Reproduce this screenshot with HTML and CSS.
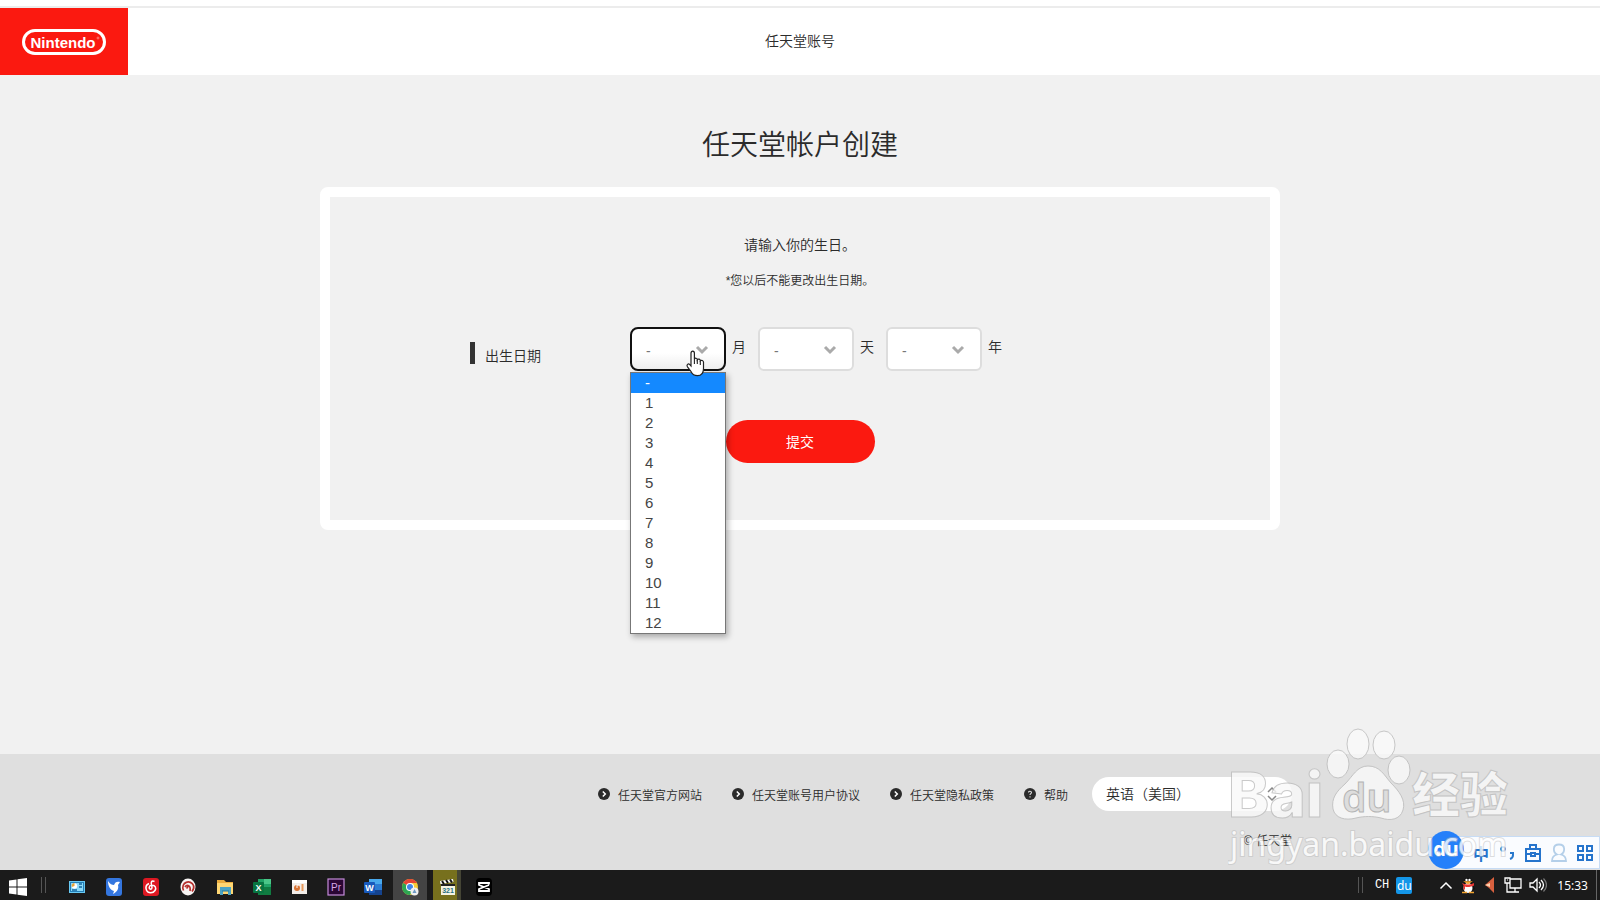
FILE: index.html
```
<!DOCTYPE html>
<html lang="zh-CN">
<head>
    <meta charset="UTF-8">
    <meta name="viewport" content="width=device-width, initial-scale=1.0">
    <title>任天堂帐户创建</title>
    <link rel="stylesheet" href="styles.css">
</head>
<body>
    <header class="header">
        <a href="/" class="logo" aria-label="Nintendo">
            <svg width="84" height="26" viewBox="0 0 84 26">
                <rect x="1.5" y="1.5" width="81" height="23" rx="11.5" fill="none" stroke="#fff" stroke-width="3"/>
                <text x="41" y="19" class="logo-text" text-anchor="middle">Nintendo</text>
                <circle cx="76" cy="9" r="1" fill="none" stroke="#ffb0aa" stroke-width=".6"/>
            </svg>
        </a>
        <p class="header-title">任天堂账号</p>
    </header>

    <main class="main">
        <h1>任天堂帐户创建</h1>
        <form class="card">
            <p class="lead">请输入你的生日。</p>
            <p class="note">*您以后不能更改出生日期。</p>
            <div class="birthday">
                <span class="birthday-label">出生日期</span>
                <div class="field open">
                    <select id="month"><option>-</option></select>
                    <svg class="chevron" width="14" height="10" viewBox="0 0 14 10"><path d="M2 2l5 5 5-5"/></svg>
                    <ul class="options">
                        <li class="selected">-</li>
                        <li>1</li>
                        <li>2</li>
                        <li>3</li>
                        <li>4</li>
                        <li>5</li>
                        <li>6</li>
                        <li>7</li>
                        <li>8</li>
                        <li>9</li>
                        <li>10</li>
                        <li>11</li>
                        <li>12</li>
                    </ul>
                    <svg class="pointer" width="19" height="27" viewBox="0 0 19 27">
                        <path d="M5 3.2C5 .4 8.400 .4 8.400 3.200V9C9 7.700 11.300 8 11.300 9.700C12.200 8.500 14.300 9 14.300 10.700C15.500 9.800 17.500 10.500 17.500 12.300V18.500C17.500 22.500 15.500 25.700 11.500 25.700C8 25.700 6.300 24.300 5 21.500L1.500 16.800C.2 14.600 2.300 13.200 3.800 14.600L5 16Z" fill="#fff" stroke="#222" stroke-width="1.2"/>
                        <path d="M8.400 9v5M11.300 10v4M14.300 11v4" stroke="#222" stroke-width="1.100"/>
                    </svg>
                </div>
                <label for="month">月</label>
                <div class="field">
                    <select id="day"><option>-</option></select>
                    <svg class="chevron" width="14" height="10" viewBox="0 0 14 10"><path d="M2 2l5 5 5-5"/></svg>
                </div>
                <label for="day">天</label>
                <div class="field">
                    <select id="year"><option>-</option></select>
                    <svg class="chevron" width="14" height="10" viewBox="0 0 14 10"><path d="M2 2l5 5 5-5"/></svg>
                </div>
                <label for="year">年</label>
            </div>
            <button type="button" class="submit-btn">提交</button>
        </form>
    </main>

    <footer class="footer">
        <nav class="footer-links">
            <a href="#"><svg width="12" height="12" viewBox="0 0 12 12"><circle cx="6" cy="6" r="6" fill="#2b2b2b"/><path d="M4.800 3.500L7.300 6 4.800 8.500" fill="none" stroke="#fff" stroke-width="1.500"/></svg>任天堂官方网站</a>
            <a href="#"><svg width="12" height="12" viewBox="0 0 12 12"><circle cx="6" cy="6" r="6" fill="#2b2b2b"/><path d="M4.800 3.500L7.300 6 4.800 8.500" fill="none" stroke="#fff" stroke-width="1.500"/></svg>任天堂账号用户协议</a>
            <a href="#"><svg width="12" height="12" viewBox="0 0 12 12"><circle cx="6" cy="6" r="6" fill="#2b2b2b"/><path d="M4.800 3.500L7.300 6 4.800 8.500" fill="none" stroke="#fff" stroke-width="1.500"/></svg>任天堂隐私政策</a>
            <a href="#"><svg width="12" height="12" viewBox="0 0 12 12"><circle cx="6" cy="6" r="6" fill="#2b2b2b"/><path d="M4.500 4.600C4.500 2.700 7.500 2.800 7.500 4.600C7.500 5.700 6 5.700 6 7M6 8.200v1.200" fill="none" stroke="#ddd" stroke-width="1.100"/></svg>帮助</a>
            <div class="language">
                <select aria-label="语言"><option>英语（美国）</option></select>
                <svg width="10" height="14" viewBox="0 0 10 14"><path d="M1 5l4-4 4 4M1 9l4 4 4-4" fill="none" stroke="#888" stroke-width="1.500"/></svg>
            </div>
        </nav>
        <p class="copyright">© 任天堂</p>
    </footer>

    <div class="taskbar">
        <button class="task start" aria-label="开始"><svg width="20" height="20" viewBox="0 0 20 20"><path d="M1 3.500l7.500-1v7H1zM9.500 2.300L19 1v8.500H9.500zM1 10.500h7.500v7L1 16.500zM9.500 10.500H19V19l-9.500-1.300z" fill="#fff"/></svg></button>
        <span class="divider"></span>
        <div class="tasks">
            <button class="task" aria-label="控制面板"><svg width="18" height="18" viewBox="0 0 18 18"><path d="M1 3h16v12H1z" fill="#68c9f3"/><path d="M2 4h14v10H2z" fill="#247fb8"/><path d="M3 5h12v8H3z" fill="#8bdaf8"/><circle cx="6.500" cy="8" r="2.700" fill="#fff"/><path d="M6.500 8V5A3 3 0 0 0 3.800 9z" fill="#e5a336"/><path d="M11 6h3M11 9h3M4 12h5" stroke="#16679d" stroke-width="1.300"/></svg></button>
            <button class="task" aria-label="迅雷"><svg width="18" height="18" viewBox="0 0 18 18"><rect x="1" width="16" height="18" rx="3" fill="#3476df"/><path d="M3 3c2 3 4 4 6 4 1-3 3-4 6-3l-2 3c1 4-1 7-5 9l1-3c-4-1-6-5-6-10z" fill="#fff"/></svg></button>
            <button class="task" aria-label="网易云音乐"><svg width="18" height="18" viewBox="0 0 18 18"><rect x="1" width="16" height="18" rx="3" fill="#dd1822"/><path d="M12.500 3.500C9 2 9 5 9.500 7s1 4-.7 4.200C6.500 11 6.700 7.500 9.500 7.300c4-.3 5 3 3.500 5.200-2 3-7 3-8.500-.3C3.300 9 4.500 6.500 7 5.500" fill="none" stroke="#fff" stroke-width="1.500"/></svg></button>
            <button class="task" aria-label="仪表"><svg width="18" height="18" viewBox="0 0 18 18"><ellipse cx="9" cy="9" rx="7.500" ry="8.500" fill="#f8f5f4"/><path d="M4.500 12.500C1 4 12 1 14.500 7.500c.8 2 0 4-1.500 6M6 9c2-3 6-2 5 4M7.500 10.500l2.500-3" fill="none" stroke="#b5302d" stroke-width="1.700"/></svg></button>
            <button class="task" aria-label="文件资源管理器"><svg width="18" height="18" viewBox="0 0 18 18"><path d="M1 2h7l2 2h7v12H1z" fill="#e9ac3f"/><path d="M1 5h16v11H1z" fill="#ffd773"/><path d="M4 9h11v8h-3v-4H7v4H4z" fill="#4ba4c5"/><path d="M6 13h7" stroke="#257b9e"/></svg></button>
            <button class="task" aria-label="Excel"><svg width="18" height="18" viewBox="0 0 18 18"><path d="M5 1h13v16H5z" fill="#21a366"/><path d="M11 1h7v5h-7z" fill="#4bc688"/><path d="M5 9h13v8H5z" fill="#107c41"/><rect y="4" width="11" height="11" rx="1" fill="#087441"/><text x="5.500" y="13" class="icon-text" text-anchor="middle">X</text></svg></button>
            <button class="task" aria-label="图表"><svg width="18" height="18" viewBox="0 0 18 18"><path d="M2 2h15v14H2z" fill="#f3eeea"/><path d="M2 2h15v3H2z" fill="#fff"/><circle cx="7" cy="10" r="3" fill="#d87536"/><path d="M7 10V7h2" fill="none" stroke="#fff"/><path d="M12.500 6v7" stroke="#e89a5c" stroke-width="2"/></svg></button>
            <button class="task" aria-label="Premiere"><svg width="18" height="18" viewBox="0 0 18 18"><rect x="1" y="1" width="16" height="16" fill="#2a0634" stroke="#c58cda" stroke-width="1.200"/><text x="9" y="13" class="icon-text pr" text-anchor="middle">Pr</text></svg></button>
            <button class="task" aria-label="Word"><svg width="18" height="18" viewBox="0 0 18 18"><path d="M5 1h13v16H5z" fill="#2b7cd3"/><path d="M5 1h13v5H5z" fill="#49a9ed"/><path d="M5 12h13v5H5z" fill="#15438e"/><rect y="4" width="11" height="11" rx="1" fill="#185abd"/><text x="5.500" y="13" class="icon-text" text-anchor="middle">W</text></svg></button>
            <button class="task active" aria-label="Chrome"><svg width="18" height="18" viewBox="0 0 18 18"><circle cx="9" cy="9" r="8" fill="#f7c936"/><path d="M9 9L2.100 5A8 8 0 0 1 16 5H9z" fill="#e64435"/><path d="M9 9L2.100 5A8 8 0 0 0 9 17l3-6z" fill="#2da653"/><circle cx="9" cy="9" r="4" fill="#fff"/><circle cx="9" cy="9" r="3" fill="#4285e8"/><circle cx="13.500" cy="13.500" r="4" fill="#f0f0f0"/><path d="M13.500 11l-2 4h4z" fill="#6e9ac4"/></svg></button>
            <button class="task recording" aria-label="视频"><svg width="18" height="18" viewBox="0 0 18 18"><path d="M3 7h14v10H3z" fill="#f5f3e2"/><path d="M2 3l13-2 .5 3-13 2z" fill="#fff"/><path d="M4 3l2 3M8 2l2 3M12 1.500l2 3" stroke="#111" stroke-width="2"/><path d="M3 6h14v2H3z" fill="#222"/><text x="10" y="15" class="icon-text clip" text-anchor="middle">321</text></svg></button>
            <button class="task" aria-label="剪映"><svg width="18" height="18" viewBox="0 0 18 18"><rect x="1" y="0" width="16" height="18" rx="4" fill="#000"/><path d="M14 6.500V5H4v2l10 4v2H4v-2l10-4" fill="none" stroke="#fff" stroke-width="1.800"/></svg></button>
        </div>
        <div class="tray">
            <span class="divider"></span>
            <span class="lang-code">CH</span>
            <span class="du-badge">du</span>
            <svg class="tray-up" width="14" height="9" viewBox="0 0 14 9"><path d="M1.500 7.500L7 2l5.500 5.500" fill="none" stroke="#fff" stroke-width="1.500"/></svg>
            <svg width="16" height="18" viewBox="0 0 16 18"><path d="M4 7C3 0 13 0 12 7l3 6-2 1-1 2H4l-1-2-2-1z" fill="#111"/><ellipse cx="8" cy="12" rx="4.500" ry="5" fill="#fff"/><path d="M2 7c4 2 8 2 12 0v2.500c-3 1.500-7 2-9 1v3H3.500v-4z" fill="#e93632"/><circle cx="6.500" cy="4" r="1.200" fill="#fff"/><circle cx="9.500" cy="4" r="1.200" fill="#fff"/><path d="M5.500 6h5L8 7.500zM2 16.500h5M9 16.500h5" fill="#f4a531" stroke="#f4a531" stroke-width="1.300"/></svg>
            <svg width="14" height="18" viewBox="0 0 14 18"><path d="M2 9l9-8v16l-5-5z" fill="#d8603e"/><path d="M2 9l5-2v4z" fill="#ffd0ad"/></svg>
            <svg width="18" height="18" viewBox="0 0 18 18"><path d="M6 3h11v9H6zM11 12v4M7 16h8M1 2h5v5H1zM3 7v9h4" fill="none" stroke="#fff" stroke-width="1.300"/><path d="M3 4h1" stroke="#fff"/></svg>
            <svg width="18" height="16" viewBox="0 0 18 16"><path d="M1 6h3l4-4v12l-4-4H1zM10 5q3 3 0 6M12 3q5 5 0 10" fill="none" stroke="#fff" stroke-width="1.300"/><path d="M14.500 1.500q6 6.500 0 13" fill="none" stroke="#777" stroke-width="1.200"/></svg>
            <time class="clock">15:33</time>
        </div>
    </div>

    <!-- floating input method bar -->
    <div class="ime-bar">
        <span class="ime-logo">du</span>
        <span class="ime-mode">中</span>
        <svg width="18" height="18" viewBox="0 0 18 18"><circle cx="5" cy="5" r="2" fill="none" stroke="#2878cc" stroke-width="1.800"/><path d="M12 9h3v2q0 3-3 4" fill="none" stroke="#2878cc" stroke-width="2"/></svg>
        <svg width="18" height="20" viewBox="0 0 18 20"><path d="M2 6h14v12H2zM6 6V2h6v4M2 11h5M11 11h5M7 10h4v3H7z" fill="none" stroke="#2574cc" stroke-width="2"/></svg>
        <svg width="18" height="20" viewBox="0 0 18 20"><path d="M9 1.500c-7 0-6 8-2 10-4 1-5 3-5 6.500h14c0-3.500-1-5.500-5-6.500 4-2 5-10-2-10z" fill="none" stroke="#b4cfe9" stroke-width="1.800"/></svg>
        <svg width="18" height="18" viewBox="0 0 18 18"><path d="M2 2h5v5H2zM11 2h5v5h-5zM2 11h5v5H2zM11 11h5v5h-5z" fill="none" stroke="#2574cc" stroke-width="2"/></svg>
    </div>

    <svg class="watermark" width="290" height="150" viewBox="0 0 290 150">
        <text x="0" y="92" class="wm-brand">Bai</text>
        <g class="wm-paw">
            <ellipse cx="110" cy="39" rx="11" ry="14"/>
            <ellipse cx="130" cy="19" rx="11" ry="15"/>
            <ellipse cx="156" cy="20" rx="11" ry="14"/>
            <ellipse cx="171" cy="45" rx="11" ry="14"/>
            <path d="M140 41c12 0 16 9 23 17 8 8 15 17 12 27-3 10-13 11-22 8-8-2-17-2-25 0-11 3-21 0-23-9-2-11 4-18 12-25 8-8 12-18 23-18z"/>
        </g>
        <text x="114" y="87" class="wm-du">du</text>
        <text x="184" y="87" class="wm-cn">经验</text>
        <text x="2" y="131" class="wm-url">jingyan.baidu.com</text>
    </svg>
</body>
</html>
```

FILE: styles.css
```
:root {
    --red: #fb1910;
    --text-color: #2b2b2b;
    --bg-color: #f1f1f1;
    --footer-bg: #dfdfdf;
    --taskbar-bg: #1b1b1b;
    --font-family: "Liberation Sans", "Noto Sans CJK SC", sans-serif;
}

* {
    box-sizing: border-box;
    margin: 0;
    padding: 0;
}

body {
    position: relative;
    display: flex;
    flex-direction: column;
    min-height: 100vh;
    font-family: var(--font-family);
    font-size: 14px;
    font-weight: 350;
    color: var(--text-color);
    background-color: var(--bg-color);
    overflow-x: hidden;
}

svg {
    display: block;
    flex-shrink: 0;
}

select,
button {
    font-family: inherit;
    color: inherit;
    border: none;
}

.header {
    display: grid;
    grid-template-columns: 1fr auto 1fr;
    align-items: center;
    margin-top: 6px;
    border-top: 2px solid #ececec;
    background-color: #fff;
    box-shadow: 0 -6px 0 #fff;
}

.header-title {
    padding-bottom: 4px;
}

.logo {
    display: flex;
    align-items: center;
    justify-content: center;
    width: 128px;
    height: 67px;
    background-color: var(--red);
}

.logo-text {
    font-size: 15px;
    font-weight: 700;
    fill: #fff;
}

.main {
    flex: 1;
    padding: 47px 20px 44px;
}

h1 {
    margin-bottom: 17px;
    font-size: 28px;
    font-weight: 350;
    line-height: 48px;
    text-align: center;
}

.card {
    max-width: 960px;
    margin: 0 auto;
    padding: 38px 20px 57px;
    border: 10px solid #fff;
    border-radius: 8px;
    text-align: center;
}

.lead,
.note {
    line-height: 20px;
}

.note {
    margin-top: 16px;
    font-size: 12px;
}

.birthday {
    display: flex;
    max-width: 660px;
    margin: 36px auto 49px;
    text-align: left;
}

.birthday-label {
    align-self: flex-end;
    width: 160px;
    height: 30px;
    padding-left: 15px;
    line-height: 30px;
    background: linear-gradient(#333, #333) 0 1px / 5px 22px no-repeat;
}

.birthday label {
    margin: 0 12px 0 6px;
    line-height: 40px;
}

.field {
    position: relative;
    width: 96px;
}

.field select {
    width: 100%;
    height: 44px;
    padding: 4px 14px 0;
    border: 2px solid #ddd;
    border-radius: 6px;
    font-size: 14px;
    color: #777;
    background-color: #fff;
    appearance: none;
}

.field.open select {
    border-color: #111;
    border-radius: 8px;
    background: linear-gradient(#fff 60%, #eee);
}

.chevron {
    position: absolute;
    top: 18px;
    right: 17px;
    fill: none;
    stroke: #aaa;
    stroke-width: 3;
}

.options {
    position: absolute;
    top: 45px;
    left: 0;
    z-index: 1;
    width: 100%;
    border: 1px solid #777;
    font-size: 15px;
    font-weight: 400;
    line-height: 20px;
    color: #444;
    list-style: none;
    background-color: #fff;
    box-shadow: 2px 3px 6px rgba(0, 0, 0, 0.3);
}

.options li {
    padding-left: 14px;
}

.options .selected {
    color: #fff;
    background-color: #1489ff;
}

.pointer {
    position: absolute;
    top: 23px;
    left: 56px;
    z-index: 2;
}

.submit-btn {
    width: 149px;
    height: 43px;
    padding-bottom: 2px;
    border-radius: 22px;
    font-size: 14px;
    font-weight: 400;
    color: #fff;
    background-color: var(--red);
    cursor: pointer;
}

.footer {
    min-height: 116px;
    padding: 23px 308px 18px;
    font-size: 12px;
    background-color: var(--footer-bg);
}

.footer-links {
    display: flex;
    align-items: center;
    justify-content: flex-end;
    gap: 30px;
    white-space: nowrap;
}

.footer-links a {
    display: flex;
    align-items: center;
    gap: 8px;
    color: inherit;
    text-decoration: none;
}

.language {
    position: relative;
    width: 200px;
    margin-left: -6px;
}

.language select {
    width: 100%;
    height: 34px;
    padding: 0 14px;
    border-radius: 17px;
    font-size: 14px;
    font-weight: 350;
    background-color: #fff;
    appearance: none;
}

.language svg {
    position: absolute;
    top: 10px;
    right: 15px;
}

.copyright {
    margin-top: 20px;
    line-height: 20px;
    text-align: right;
}

.taskbar {
    display: flex;
    align-items: center;
    height: 30px;
    padding-right: 3px;
    color: #fff;
    background-color: var(--taskbar-bg);
}

.task {
    display: flex;
    align-items: center;
    justify-content: center;
    width: 37px;
    height: 30px;
    padding-top: 3px;
    background: none;
}

.task.start {
    width: 36px;
}

.tasks {
    display: flex;
    margin-left: 12px;
}

.task.active {
    background: linear-gradient(#444, #444) center / 34px no-repeat;
}

.task.recording {
    background: linear-gradient(90deg, #77701d 24px, #454535 24px) 5px 0 / 28px no-repeat;
}

.divider {
    width: 5px;
    height: 16px;
    margin-left: 5px;
    border: 1px solid #555;
    border-width: 0 1px;
}

.icon-text {
    font-size: 9px;
    font-weight: 700;
    fill: #fff;
}

.icon-text.pr {
    font-size: 10px;
    font-weight: 400;
    fill: #d7a6e6;
}

.icon-text.clip {
    font-size: 7px;
    fill: #287080;
}

.tray {
    display: flex;
    align-items: center;
    gap: 7px;
    height: 100%;
    margin-left: auto;
    padding-right: 8px;
    border-right: 1px solid #666;
}

.lang-code {
    margin-left: 5px;
    font-family: "Liberation Mono", monospace;
    font-size: 12px;
    font-weight: 400;
}

.du-badge {
    width: 16px;
    border-radius: 2px;
    font-family: "Noto Sans", sans-serif;
    font-size: 12px;
    font-weight: 400;
    line-height: 17px;
    text-align: center;
    background-color: #1496e8;
}

.tray-up {
    margin-left: 20px;
}

.clock {
    margin-left: 3px;
    font-family: "Noto Sans", sans-serif;
    font-size: 12px;
    font-weight: 400;
}

.ime-bar {
    position: absolute;
    right: 0;
    bottom: 31px;
    display: flex;
    align-items: center;
    gap: 8px;
    height: 33px;
    padding-right: 5px;
    border: 1px solid #c7dcf5;
    background-color: #fafcff;
}

.ime-logo {
    width: 36px;
    height: 38px;
    margin: 0 0 6px -18px;
    border-radius: 50%;
    font-family: "Noto Sans", sans-serif;
    font-size: 20px;
    font-weight: 700;
    line-height: 36px;
    text-align: center;
    color: #fff;
    background-color: #2580fa;
}

.ime-mode {
    width: 18px;
    font-size: 16px;
    font-weight: 700;
    text-align: center;
    color: #2574cc;
}

.watermark {
    position: absolute;
    right: 82px;
    bottom: 25px;
    z-index: 3;
    pointer-events: none;
    opacity: 0.8;
}

.wm-brand,
.wm-cn,
.wm-paw {
    fill: #fafafa;
    stroke: #bdbdbd;
}

.wm-brand {
    font-family: Inter, sans-serif;
    font-size: 62px;
    font-weight: 800;
}

.wm-du {
    font-family: "Noto Sans", sans-serif;
    font-size: 39px;
    font-weight: 600;
    fill: #ddd;
    stroke: #aaa;
}

.wm-cn {
    font-family: "Noto Sans CJK SC", sans-serif;
    font-size: 48px;
    font-weight: 900;
}

.wm-url {
    font-family: "Noto Sans", sans-serif;
    font-size: 32px;
    font-weight: 400;
    fill: #fff;
    stroke: #bbb;
    stroke-width: 2;
    stroke-opacity: 0.6;
    paint-order: stroke;
}

@media (max-width: 1400px) {
    .footer {
        padding-left: 20px;
        padding-right: 20px;
    }

    .footer-links {
        flex-wrap: wrap;
    }
}
```
